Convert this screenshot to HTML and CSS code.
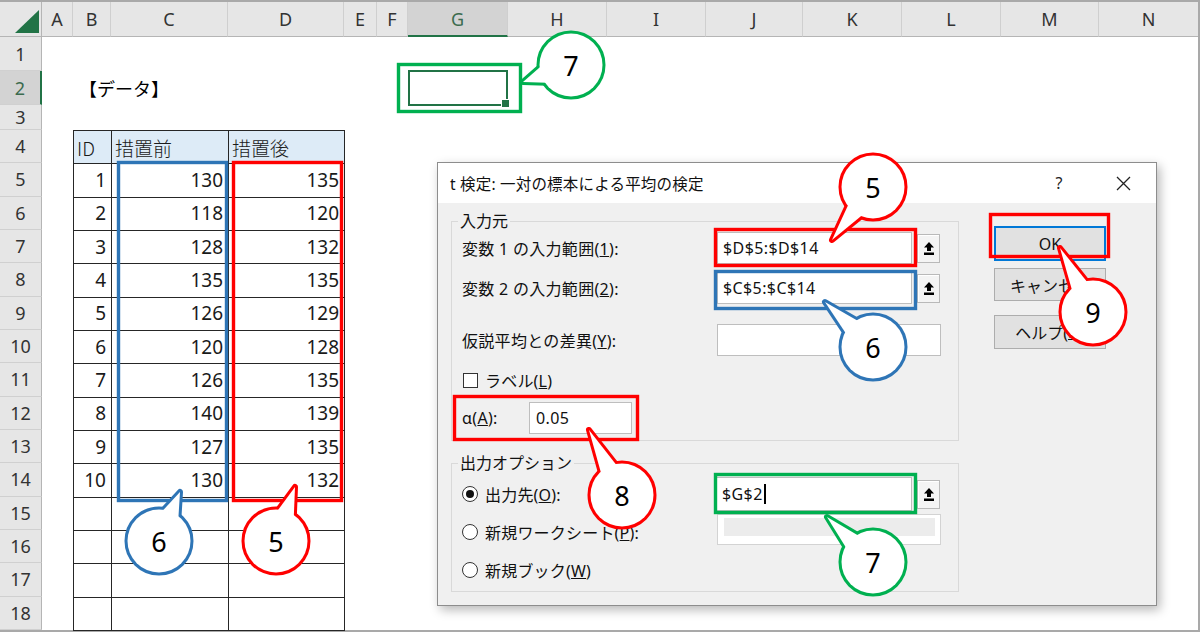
FILE: index.html
```html
<!DOCTYPE html>
<html lang="ja">
<head>
<meta charset="utf-8">
<title>t検定</title>
<link rel="stylesheet" href="styles.css">
</head>
<body>
<div class="sheet">
  <div class="corner"><svg width="24" height="23" viewBox="0 0 24 23"><path d="M24 0 V23 H0 Z" fill="#217346"/></svg></div>
  <div class="colhead">
    <div class="ch">A</div><div class="ch">B</div><div class="ch">C</div><div class="ch">D</div><div class="ch">E</div><div class="ch">F</div><div class="ch on">G</div><div class="ch">H</div><div class="ch">I</div><div class="ch">J</div><div class="ch">K</div><div class="ch">L</div><div class="ch">M</div><div class="ch last">N</div>
  </div>
  <div class="rowhead">
    <div class="rh">1</div><div class="rh on">2</div><div class="rh">3</div><div class="rh">4</div><div class="rh">5</div><div class="rh">6</div><div class="rh">7</div><div class="rh">8</div><div class="rh">9</div><div class="rh">10</div><div class="rh">11</div><div class="rh">12</div><div class="rh">13</div><div class="rh">14</div><div class="rh">15</div><div class="rh">16</div><div class="rh">17</div><div class="rh">18</div>
  </div>
  <div class="cells">
    <div class="heading">【データ】</div>
    <div class="sel"></div>
    <div class="tablewrap">
      <table class="data">
        <colgroup><col class="c-id"><col class="c-v"><col class="c-v2"></colgroup>
        <tr><th>ID</th><th>措置前</th><th>措置後</th></tr>
        <tr><td>1</td><td>130</td><td>135</td></tr>
        <tr><td>2</td><td>118</td><td>120</td></tr>
        <tr><td>3</td><td>128</td><td>132</td></tr>
        <tr><td>4</td><td>135</td><td>135</td></tr>
        <tr><td>5</td><td>126</td><td>129</td></tr>
        <tr><td>6</td><td>120</td><td>128</td></tr>
        <tr><td>7</td><td>126</td><td>135</td></tr>
        <tr><td>8</td><td>140</td><td>139</td></tr>
        <tr><td>9</td><td>127</td><td>135</td></tr>
        <tr><td>10</td><td>130</td><td>132</td></tr>
        <tr><td></td><td></td><td></td></tr>
        <tr><td></td><td></td><td></td></tr>
        <tr><td></td><td></td><td></td></tr>
        <tr><td></td><td></td><td></td></tr>
      </table>
    </div>
  </div>
</div>

<div class="dialog">
  <div class="titlebar">
    <span class="ttl">t 検定: 一対の標本による平均の検定</span>
    <span class="qmark">?</span>
    <span class="close"><svg width="15" height="15" viewBox="0 0 15 15"><path d="M1 1 L14 14 M14 1 L1 14" stroke="#222" stroke-width="1.3" fill="none"/></svg></span>
  </div>
  <div class="dbody">
    <div class="groups">
      <fieldset class="grp g1">
        <legend>入力元</legend>
        <div class="frow">
          <span class="lbl">変数 1 の入力範囲(<u>1</u>):</span>
          <span class="inp w-in">$D$5:$D$14</span>
          <span class="ref"><svg width="10" height="13" viewBox="0 0 10 13"><path d="M5 0 L10 5.5 H7 V9 H3 V5.5 H0 Z" fill="#000"/><rect x="0" y="10.5" width="10" height="2.5" fill="#000"/></svg></span>
        </div>
        <div class="frow r2">
          <span class="lbl">変数 2 の入力範囲(<u>2</u>):</span>
          <span class="inp w-in">$C$5:$C$14</span>
          <span class="ref"><svg width="10" height="13" viewBox="0 0 10 13"><path d="M5 0 L10 5.5 H7 V9 H3 V5.5 H0 Z" fill="#000"/><rect x="0" y="10.5" width="10" height="2.5" fill="#000"/></svg></span>
        </div>
        <div class="frow r3">
          <span class="lbl">仮説平均との差異(<u>Y</u>):</span>
          <span class="inp w-wide"></span>
        </div>
        <div class="frow r4">
          <span class="chk"></span><span class="opt">ラベル(<u>L</u>)</span>
        </div>
        <div class="frow r5">
          <span class="lbl alpha">α(<u>A</u>):</span>
          <span class="inp w-alpha">0.05</span>
        </div>
      </fieldset>
      <fieldset class="grp g2">
        <legend>出力オプション</legend>
        <div class="outgrid">
          <div class="orow"><span class="radio on"></span><span class="opt">出力先(<u>O</u>):</span></div>
          <div class="ocell">
            <span class="inp w-in out">$G$2<span class="caret"></span></span>
            <span class="ref"><svg width="10" height="13" viewBox="0 0 10 13"><path d="M5 0 L10 5.5 H7 V9 H3 V5.5 H0 Z" fill="#000"/><rect x="0" y="10.5" width="10" height="2.5" fill="#000"/></svg></span>
          </div>
          <div class="orow"><span class="radio"></span><span class="opt">新規ワークシート(<u>P</u>):</span></div>
          <div class="ocell"><span class="inp w-wide dis"><span class="disfill"></span></span></div>
          <div class="orow"><span class="radio"></span><span class="opt">新規ブック(<u>W</u>)</span></div>
        </div>
      </fieldset>
    </div>
    <div class="btns">
      <div class="btn ok">OK</div>
      <div class="btn cancel">キャンセル</div>
      <div class="btn helpb">ヘルプ(<u>H</u>)</div>
    </div>
  </div>
</div>

<svg class="overlay" width="1200" height="632" viewBox="0 0 1200 632">
  <g class="hl">
    <rect class="g" x="398.5" y="64.5" width="122" height="47"/>
    <rect class="b" x="118.5" y="162.5" width="108" height="338"/>
    <rect class="r" x="233.5" y="162.5" width="108" height="338"/>
    <rect class="r" x="715.5" y="229.5" width="200" height="36"/>
    <rect class="b" x="715.5" y="271.5" width="200" height="37"/>
    <rect class="r" x="990.5" y="214.5" width="118" height="42"/>
    <rect class="r" x="454.5" y="396.5" width="183" height="43"/>
    <rect class="g" x="715.5" y="474.5" width="200" height="38"/>
  </g>

  <g class="co g">
    <path class="st" d="M523 82 L546.9 82.8 L541 66.3 Z"/><circle class="st" cx="571" cy="65" r="31.5"/>
    <path class="fl" d="M523 82 L546.9 82.8 L541 66.3 Z"/><circle class="fl" cx="571" cy="65" r="31.5"/>
    <text x="571" y="65">7</text>
  </g>
  <g class="co b">
    <path class="st" d="M180 492 L178.4 518.1 L162.2 511.2 Z"/><circle class="st" cx="159" cy="541" r="31.5"/>
    <path class="fl" d="M180 492 L178.4 518.1 L162.2 511.2 Z"/><circle class="fl" cx="159" cy="541" r="31.5"/>
    <text x="159" y="541">6</text>
  </g>
  <g class="co r">
    <path class="st" d="M295 487 L293.8 516.8 L277.3 511 Z"/><circle class="st" cx="276" cy="541" r="31.5"/>
    <path class="fl" d="M295 487 L293.8 516.8 L277.3 511 Z"/><circle class="fl" cx="276" cy="541" r="31.5"/>
    <text x="276" y="541">5</text>
  </g>
  <g class="co r">
    <path class="st" d="M832 240 L862.4 215.1 L848.5 204.3 Z"/><circle class="st" cx="873" cy="187" r="31.5"/>
    <path class="fl" d="M832 240 L862.4 215.1 L848.5 204.3 Z"/><circle class="fl" cx="873" cy="187" r="31.5"/>
    <text x="873" y="187">5</text>
  </g>
  <g class="co b">
    <path class="st" d="M825 302 L858.1 321 L846.1 333.8 Z"/><circle class="st" cx="873" cy="347" r="31.5"/>
    <path class="fl" d="M825 302 L858.1 321 L846.1 333.8 Z"/><circle class="fl" cx="873" cy="347" r="31.5"/>
    <text x="873" y="347">6</text>
  </g>
  <g class="co r">
    <path class="st" d="M1060 248 L1087.6 282.5 L1072.1 290.5 Z"/><circle class="st" cx="1093" cy="312" r="31.5"/>
    <path class="fl" d="M1060 248 L1087.6 282.5 L1072.1 290.5 Z"/><circle class="fl" cx="1093" cy="312" r="31.5"/>
    <text x="1093" y="312">9</text>
  </g>
  <g class="co r">
    <path class="st" d="M589 430 L616.8 465.5 L601.2 473.4 Z"/><circle class="st" cx="622" cy="495" r="31.5"/>
    <path class="fl" d="M589 430 L616.8 465.5 L601.2 473.4 Z"/><circle class="fl" cx="622" cy="495" r="31.5"/>
    <text x="622" y="495">8</text>
  </g>
  <g class="co g">
    <path class="st" d="M827 517 L858.6 535.7 L846.4 548.2 Z"/><circle class="st" cx="873" cy="562" r="31.5"/>
    <path class="fl" d="M827 517 L858.6 535.7 L846.4 548.2 Z"/><circle class="fl" cx="873" cy="562" r="31.5"/>
    <text x="873" y="562">7</text>
  </g>
</svg>
</body>
</html>
```

FILE: styles.css
```css
* { box-sizing: border-box; }
html, body { margin: 0; padding: 0; }
:root {
  --cols: 31px 38px 117px 116px 33px 31px 100px 99px 99px 97px 99px 99px 98px 99px;
  --rows: 34px 34px 25px repeat(15, 1fr);
  --red: #ff0000;
  --blue: #2e75b6;
  --green: #00b050;
}
body {
  width: 1200px;
  height: 632px;
  overflow: hidden;
  position: relative;
  background: #fff;
  font-family: "Noto Sans", "Noto Sans CJK JP", sans-serif;
  color: #111;
}

/* ---------- sheet ---------- */
.sheet {
  display: grid;
  grid-template-columns: 42px 1156px;
  grid-template-rows: 35px 593px;
  width: 1200px;
  height: 632px;
  border-top: 2px solid #a9a9a9;
  border-right: 2px solid #a9a9a9;
  border-bottom: 2px solid #a9a9a9;
}
.corner {
  background: #e6e6e6;
  border-right: 1px solid #b5b5b5;
  border-bottom: 1px solid #b5b5b5;
  display: flex;
  align-items: flex-end;
  justify-content: flex-end;
  padding: 0 2px 3px 0;
}
.corner svg { display: block; }
.colhead {
  display: grid;
  grid-template-columns: var(--cols);
  background: #e6e6e6;
}
.ch {
  display: flex;
  align-items: center;
  justify-content: center;
  border-right: 1px solid #cfcfcf;
  border-bottom: 1px solid #b5b5b5;
  font-size: 18px;
  color: #333;
}
.ch.last { border-right: none; }
.ch.on {
  background: #d3d3d3;
  color: #3b6b4e;
  border-bottom: 2px solid #217346;
}
.rowhead {
  display: grid;
  grid-template-rows: var(--rows);
  background: #e6e6e6;
}
.rh {
  display: flex;
  align-items: center;
  justify-content: center;
  border-right: 1px solid #b5b5b5;
  border-bottom: 1px solid #d0d0d0;
  font-size: 18px;
  color: #333;
}
.rh.on {
  background: #d3d3d3;
  color: #3b6b4e;
  border-right: 2px solid #217346;
}
.cells {
  display: grid;
  grid-template-columns: var(--cols);
  grid-template-rows: var(--rows);
  background: #fff;
}
.heading {
  grid-row: 2;
  grid-column: 2 / span 4;
  align-self: center;
  padding-left: 6px;
  font-size: 18px;
  font-family: "Noto Sans CJK JP", sans-serif;
  color: #000;
}
.sel {
  grid-row: 2;
  grid-column: 7;
  border: 2px solid #217346;
  margin: -1px 0 -1px 0;
  position: relative;
}
.sel::after {
  content: "";
  position: absolute;
  right: -4px;
  bottom: -4px;
  width: 7px;
  height: 7px;
  background: #217346;
  border: 1px solid #fff;
}
.tablewrap {
  grid-row: 4 / span 15;
  grid-column: 2 / span 3;
}
.data {
  border-collapse: collapse;
  table-layout: fixed;
  width: 100%;
  height: 100%;
  font-size: 19px;
  color: #1a1a1a;
}
.c-id { width: 38px; }
.c-v { width: 117px; }
.c-v2 { width: 116px; }
.data th, .data td {
  border: 1px solid #262626;
  height: 33.33px;
  line-height: 1;
  padding: 0 5px;
  white-space: nowrap;
}
.data th {
  background: #ddebf7;
  font-weight: normal;
  text-align: left;
  padding: 0 3px;
  font-family: "Noto Sans CJK JP", sans-serif;
  font-weight: 300;
}
.data td { text-align: right; }

/* ---------- dialog ---------- */
.dialog {
  position: absolute;
  left: 437px;
  top: 162px;
  width: 720px;
  height: 444px;
  border: 1px solid #8d8d8d;
  background: #f0f0f0;
  box-shadow: 3px 4px 10px rgba(0, 0, 0, 0.28);
  font-size: 16px;
  color: #111;
}
.titlebar {
  height: 40px;
  background: #fff;
  display: flex;
  align-items: center;
  padding-left: 12px;
  font-size: 15.5px;
}
.ttl { flex: 1; letter-spacing: 0.2px; }
.qmark {
  width: 30px;
  text-align: center;
  margin-right: 16px;
  font-size: 16px;
  color: #222;
}
.close {
  width: 66px;
  display: flex;
  justify-content: center;
  align-items: center;
}
.close svg { display: block; }
.dbody {
  display: flex;
  padding: 8px 0 0 13px;
}
.groups { width: 508px; }
.grp {
  margin: 0;
  min-width: 0;
  border: 1px solid #d9d9d9;
}
.grp legend {
  margin-left: -4px;
  padding: 0 2px;
  line-height: 20px;
  font-size: 16px;
}
.g1 { padding: 1px 0 6px 10px; }
.g2 { padding: 4px 0 4px 10px; margin-top: 12px; }
.frow {
  display: flex;
  align-items: center;
  height: 32px;
}
.r2 { margin-top: 8px; }
.r3 { margin-top: 20px; }
.r4 { margin-top: 8px; }
.r5 { margin-top: 6px; }
.lbl { width: 255px; letter-spacing: 0.3px; }
.lbl.alpha { width: 67px; }
.opt { margin-left: 7px; letter-spacing: 0.2px; }
.inp {
  height: 32px;
  background: #fff;
  border: 1px solid #bebebe;
  display: flex;
  align-items: center;
  padding-left: 5px;
  font-size: 16px;
  letter-spacing: 0.4px;
  color: #111;
}
.w-in { width: 195px; }
.w-wide { width: 224px; }
.w-alpha { width: 103px; padding-left: 6px; }
.ref {
  width: 23px;
  height: 29px;
  margin-left: 5px;
  background: #f4f4f4;
  border: 1px solid #b9b9b9;
  box-shadow: inset 1px 1px 0 #fff;
  display: flex;
  align-items: center;
  justify-content: center;
}
.ref svg { display: block; }
.chk {
  width: 15px;
  height: 15px;
  border: 1px solid #333;
  background: #fff;
  margin-left: 1px;
}
.outgrid {
  display: grid;
  grid-template-columns: 255px auto;
  grid-template-rows: 34px 34px 34px;
  row-gap: 4px;
}
.orow { display: flex; align-items: center; }
.ocell { display: flex; align-items: center; }
.out { height: 34px; margin-left: -1px; width: 196px; }
.caret {
  display: inline-block;
  width: 2px;
  height: 20px;
  background: #000;
  margin-left: 1px;
}
.dis {
  align-self: flex-start;
  margin-top: -1px;
  height: 31px;
  border-color: #d3d3d3;
  padding: 3px 5px 8px 6px;
}
.disfill {
  display: block;
  width: 100%;
  height: 100%;
  background: #ececec;
}
.radio {
  width: 16px;
  height: 16px;
  border-radius: 50%;
  border: 1px solid #333;
  background: #fff;
  display: flex;
  align-items: center;
  justify-content: center;
}
.radio.on::after {
  content: "";
  width: 8px;
  height: 8px;
  border-radius: 50%;
  background: #111;
}
.btns {
  margin-left: 35px;
  padding-top: 15px;
  width: 112px;
}
.btn {
  width: 112px;
  height: 34px;
  background: #e1e1e1;
  border: 1px solid #adadad;
  display: flex;
  align-items: center;
  justify-content: center;
  font-size: 16px;
}
.btn.ok { height: 35px; border: 2px solid #0078d7; }
.btn.cancel { margin-top: 7px; height: 33px; }
.btn.helpb { margin-top: 14px; }

/* ---------- overlay ---------- */
.overlay {
  position: absolute;
  left: 0;
  top: 0;
  pointer-events: none;
  z-index: 10;
}
.hl rect { fill: none; stroke-width: 3.4; }
.hl .r { stroke: var(--red); }
.hl .b { stroke: var(--blue); }
.hl .g { stroke: var(--green); }
.co .st { fill: #fff; stroke-width: 6; stroke-linejoin: round; }
.co .fl { fill: #fff; stroke: none; }
.co.r .st { stroke: var(--red); }
.co.b .st { stroke: var(--blue); }
.co.g .st { stroke: var(--green); }
.co text {
  font-family: "Noto Sans", sans-serif;
  font-size: 27px;
  fill: #000;
  text-anchor: middle;
  dominant-baseline: central;
}
```
